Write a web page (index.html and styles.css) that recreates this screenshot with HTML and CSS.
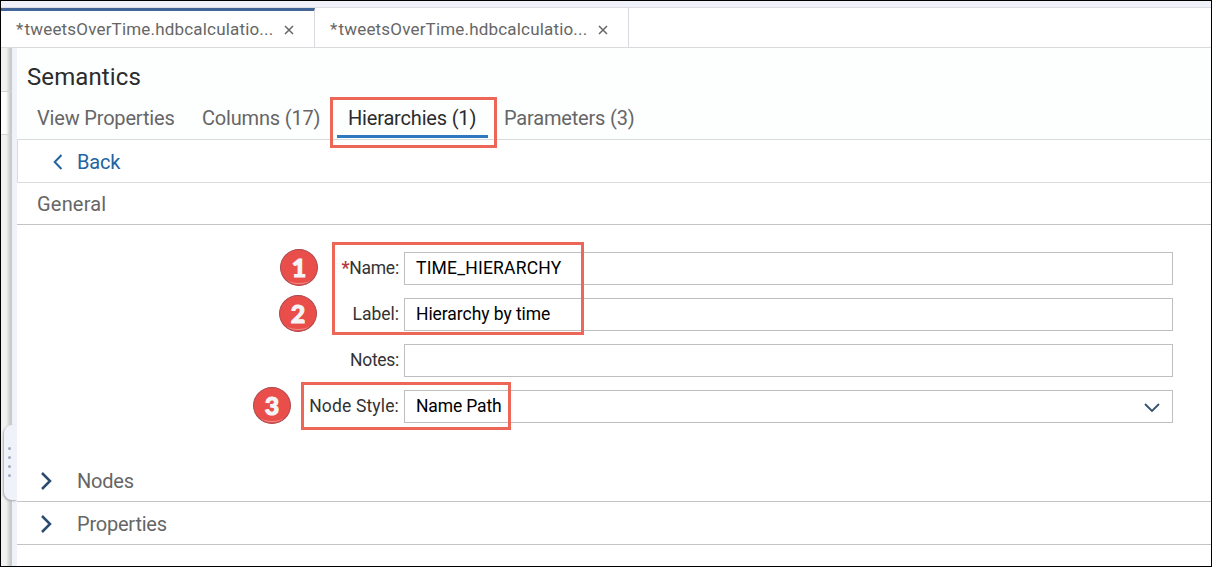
FILE: index.html
```html
<!DOCTYPE html>
<html lang="en">
<head>
<meta charset="utf-8">
<title>Semantics</title>
<link rel="stylesheet" href="styles.css">
</head>
<body>
<div class="window">
  <nav class="file-tabs">
    <div class="file-tab active"><span class="file-name"><span class="star">*</span>tweetsOverTime.hdbcalculatio...</span><svg class="close" width="10" height="10" viewBox="0 0 10 10"><path d="M1 1l8 8M9 1l-8 8"/></svg></div>
    <div class="file-tab"><span class="file-name"><span class="star">*</span>tweetsOverTime.hdbcalculatio...</span><svg class="close" width="10" height="10" viewBox="0 0 10 10"><path d="M1 1l8 8M9 1l-8 8"/></svg></div>
  </nav>
  <div class="workspace">
    <aside class="gutter">
      <div class="canvas-edge"><div class="edge-row"></div></div>
      <div class="splitter"></div>
      <div class="grip"><i></i><i></i><i></i><i></i></div>
    </aside>
    <main class="panel">
      <header class="panel-head">
        <h1 class="title"><span>Semantics</span></h1>
        <div class="view-tabs">
          <span class="view-tab t-view">View Properties</span>
          <span class="view-tab t-columns">Columns (17)</span>
          <span class="view-tab t-hier selected">Hierarchies (1)</span>
          <span class="view-tab t-param">Parameters (3)</span>
        </div>
      </header>
      <div class="back-bar"><svg width="12" height="18" viewBox="0 0 12 18"><path d="M9.500 2L2.700 9L9.500 16"/></svg><span class="back">Back</span></div>
      <div class="section-head general"><span>General</span></div>
      <form class="form">
        <div class="row"><label class="l-name"><b>*</b>Name:</label><div class="field"><span class="v-name">TIME_HIERARCHY</span></div></div>
        <div class="row"><label class="l-label">Label:</label><div class="field"><span class="v-label">Hierarchy by time</span></div></div>
        <div class="row"><label class="l-notes">Notes:</label><div class="field"></div></div>
        <div class="row"><label class="l-style">Node Style:</label><div class="field"><span class="v-style">Name Path</span><svg class="chevron-down" width="18" height="12" viewBox="0 0 18 12"><path d="M2 2l7 7l7-7"/></svg></div></div>
      </form>
      <div class="section-head fold"><svg width="12" height="20" viewBox="0 0 12 20"><path d="M2 2l8 8l-8 8"/></svg><span class="s-nodes">Nodes</span></div>
      <div class="section-head fold"><svg width="12" height="20" viewBox="0 0 12 20"><path d="M2 2l8 8l-8 8"/></svg><span class="s-props">Properties</span></div>
    </main>
  </div>
  <div class="callout c-tab"></div>
  <div class="callout c-names"></div>
  <div class="callout c-style"></div>
  <div class="badge b1">1</div>
  <div class="badge b2">2</div>
  <div class="badge b3">3</div>
</div>
</body>
</html>
```
FILE: styles.css
```css
* { box-sizing: border-box; }
body { margin: 0; font-family: Roboto, "Liberation Sans", sans-serif; background: #fff; }
svg { fill: none; flex: none; }
.window { position: relative; width: 1212px; height: 567px; border: 1px solid #000; overflow: hidden; display: flex; flex-direction: column; background: #fff; }
.file-tabs { height: 47px; flex: none; display: flex; border-top: 6px solid #f0f2f9; border-bottom: 1px solid #d9d9de; box-shadow: inset 0 1px #dcdee4; }
.file-tab { width: 314px; height: 40px; border-right: 1px solid #d9d9df; display: flex; align-items: center; padding: 3px 0 0 15px; font-size: 17px; color: #666; }
.file-tab.active { margin-top: 1px; height: 39px; border-top: 3px solid #426496; padding-top: 0; padding-bottom: 1px; }
.file-name { width: 257px; white-space: nowrap; letter-spacing: .18px; }
.star { margin-right: 1px; }
.close { margin: 3px 0 0 11px; stroke: #666; stroke-width: 1.5; }
.workspace { flex: 1; display: flex; min-height: 0; }
.gutter { position: relative; width: 16px; flex: none; display: flex; background: #f2f2f2; }
.canvas-edge { width: 11px; padding-top: 43px; background: linear-gradient(90deg, transparent 5px, #ccc 9px, #c8c8c8); }
.edge-row { height: 44px; border: solid #d4d4d4; border-width: 1px 0; background: linear-gradient(90deg, #fff 5px, #ccc 9px, #c8c8c8); }
.splitter { width: 5px; background: #f0f2fa; }
.grip { position: absolute; left: 3px; top: 377px; width: 13px; height: 75px; background: #f0f2fa; border-radius: 8px 0 0 8px; box-shadow: -1px 1px 2px #aaa; clip-path: inset(-3px 0 -4px -5px); display: flex; flex-direction: column; align-items: center; gap: 6px; padding: 22px 3px 0 0; }
.grip i { width: 3px; height: 3px; border-radius: 50%; background: #a1aabd; }
.panel { flex: 1; min-width: 0; }
.panel-head { height: 92px; background: #fdfefe; border-bottom: 1px solid #d9dadd; }
.title { margin: 0; padding: 12px 0 0 10px; height: 48px; font-size: 24px; line-height: 34px; font-weight: 400; color: #2b2c2d; letter-spacing: .1px; }
.view-tabs { display: flex; height: 43px; padding-left: 20px; }
.view-tab { height: 43px; font-size: 20px; line-height: 45px; color: #666; white-space: nowrap; letter-spacing: -.18px; }
.t-view { width: 165px; }
.t-columns { width: 135px; }
.t-hier { width: 151px; height: 42px; padding-left: 11px; border-bottom: 3px solid #3079c0; }
.view-tab.selected { color: #2b2c2d; }
.t-param { margin-left: 16px; }
.back-bar { height: 43px; display: flex; align-items: center; padding-left: 34px; border-left: 1px solid #d9dce4; border-bottom: 1px solid #d9dbdf; font-size: 20px; color: #2463a0; }
.back-bar svg { margin-top: 2px; stroke: #2463a0; stroke-width: 2; }
.back { margin: 2px 0 0 13px; letter-spacing: -.15px; }
.section-head { border-bottom: 1px solid #c4c4c4; font-size: 20px; color: #666; display: flex; align-items: center; }
.general { height: 42px; padding-left: 20px; letter-spacing: .2px; }
.form { display: flex; flex-direction: column; gap: 13px; height: 234px; padding-top: 27px; }
.row { height: 33px; display: flex; }
.row label { width: 387px; padding-right: 5px; text-align: right; font-size: 17.5px; line-height: 32px; color: #333; white-space: nowrap; }
.row .l-name { letter-spacing: -.2px; }
.row .l-notes { letter-spacing: -.3px; }
.row .l-style { letter-spacing: .15px; }
.row b { color: #b3393c; font-weight: 700; }
.field { width: 769px; height: 33px; border: 1px solid #bfbfbf; display: flex; align-items: center; justify-content: space-between; padding: 0 11px; font-size: 17.5px; line-height: 31px; color: #000; background: #fff; }
.v-name { letter-spacing: .2px; }
.v-label { letter-spacing: -.06px; }
.v-style { letter-spacing: -.15px; }
.chevron-down { stroke: #34506f; stroke-width: 1.8; margin-top: 3px; }
.fold { height: 43px; padding-left: 23px; letter-spacing: -.22px; }
.fold svg { stroke: #2c4b70; stroke-width: 2.5; margin-top: 2px; }
.fold span { margin: 1px 0 0 25px; }
.callout { position: absolute; border: 3px solid #ec6758; }
.c-tab { left: 329px; top: 96px; width: 167px; height: 51px; }
.c-names { left: 331px; top: 241px; width: 252px; height: 93px; }
.c-style { left: 300px; top: 381px; width: 210px; height: 48px; }
.badge { position: absolute; width: 38px; height: 37px; border-radius: 50%; background: #e94e4a; border: 1px solid #a94b50; color: #f5f5f8; text-align: center; font: 900 25px/35px Lato, sans-serif; -webkit-text-stroke: 1px #f5f5f8; }
.badge::after { content: ""; position: absolute; left: 7px; top: 26px; width: 22px; height: 7px; border-bottom: 1px solid #f08d88; border-radius: 0 0 50% 50%; }
.b1 { left: 279px; top: 248px; }
.b2 { left: 278px; top: 294px; }
.b3 { left: 252px; top: 386px; }
```
